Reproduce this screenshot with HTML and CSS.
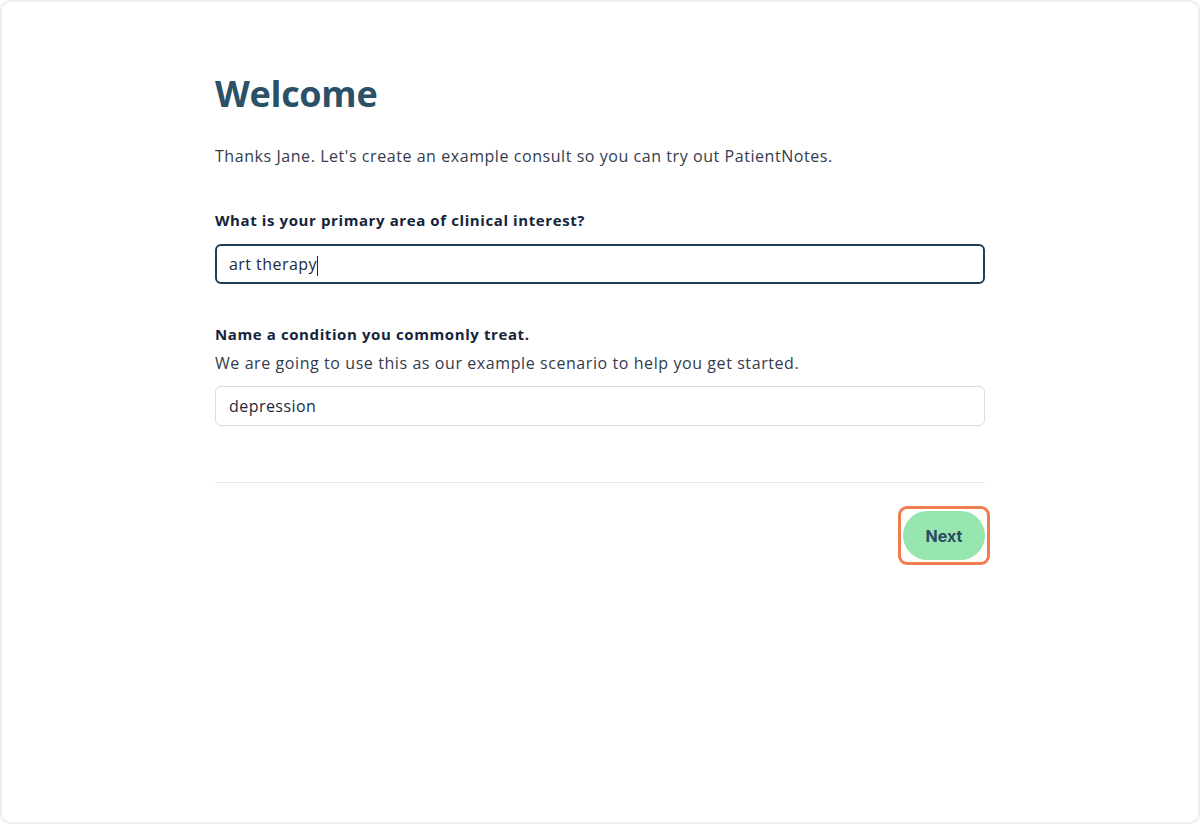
FILE: index.html
```html
<!DOCTYPE html>
<html lang="en">
<head>
    <meta charset="UTF-8">
    <meta name="viewport" content="width=device-width, initial-scale=1.0">
    <title>PatientNotes - Welcome</title>
    <link rel="stylesheet" href="styles.css">
</head>
<body>
    <div class="frame">
        <div class="container">
            <h1>Welcome</h1>
            <p class="intro">Thanks Jane. Let's create an example consult so you can try out PatientNotes.</p>

            <div class="field first">
                <label for="interest">What is your primary area of clinical interest?</label>
                <div class="input focused" id="interest">art therapy<span class="caret"></span></div>
            </div>

            <div class="field">
                <label for="condition">Name a condition you commonly treat.</label>
                <p class="hint">We are going to use this as our example scenario to help you get started.</p>
                <div class="input" id="condition">depression</div>
            </div>

            <hr class="divider">

            <div class="actions">
                <div class="highlight">
                    <button class="next">Next</button>
                </div>
            </div>
        </div>
    </div>
</body>
</html>
```

FILE: styles.css
```css
body {
    margin: 0;
    background: #ffffff;
    font-family: 'Open Sans', 'Noto Sans', sans-serif;
    color: #2f3a4c;
}

.frame {
    box-sizing: border-box;
    height: 824px;
    border: 2px solid #eeeef1;
    border-radius: 10px;
    background: #fff;
    padding-top: 70px;
}

.container {
    max-width: 770px;
    margin: 0 auto;
}

h1 {
    margin: 0;
    font-size: 36px;
    line-height: 44px;
    font-weight: 700;
    color: #2b5166;
    letter-spacing: -0.3px;
}

.intro {
    margin: 28px 0 0;
    font-size: 16px;
    line-height: 24px;
    letter-spacing: 0.56px;
    color: #333b4d;
}

.field {
    margin-top: 38px;
}

.field.first {
    margin-top: 40px;
}

label {
    display: block;
    font-size: 15px;
    font-weight: 700;
    line-height: 24px;
    letter-spacing: 0.6px;
    color: #15243a;
}

.hint {
    margin: 5px 0 0;
    font-size: 16px;
    line-height: 24px;
    letter-spacing: 0.58px;
    color: #333b4d;
}

.input {
    box-sizing: border-box;
    height: 40px;
    margin-top: 11px;
    padding: 0 13px;
    border: 1px solid #d9dce1;
    border-radius: 6px;
    font-size: 16px;
    line-height: 38px;
    letter-spacing: 0.45px;
    color: #1d2a3d;
}

.input.focused {
    margin-top: 12px;
    border: 2px solid #1f3e5a;
    padding: 0 12px;
    line-height: 36px;
}

.caret {
    display: inline-block;
    width: 1px;
    height: 20px;
    background: #1d2a3d;
    vertical-align: middle;
}

.divider {
    margin: 56px 0 0;
    border: none;
    border-top: 1px solid #e6e7ea;
}

.actions {
    display: flex;
    justify-content: flex-end;
    margin-top: 23px;
    margin-right: -5px;
}

.highlight {
    padding: 2px;
    border: 3px solid #ef7d4e;
    border-radius: 9px;
}

button {
    display: block;
    width: 82px;
    height: 49px;
    border: none;
    border-radius: 25px;
    background: #97e6b0;
    color: #2d4a65;
    font-family: 'Inter', sans-serif;
    font-size: 16px;
    font-weight: 700;
    cursor: pointer;
}
```
